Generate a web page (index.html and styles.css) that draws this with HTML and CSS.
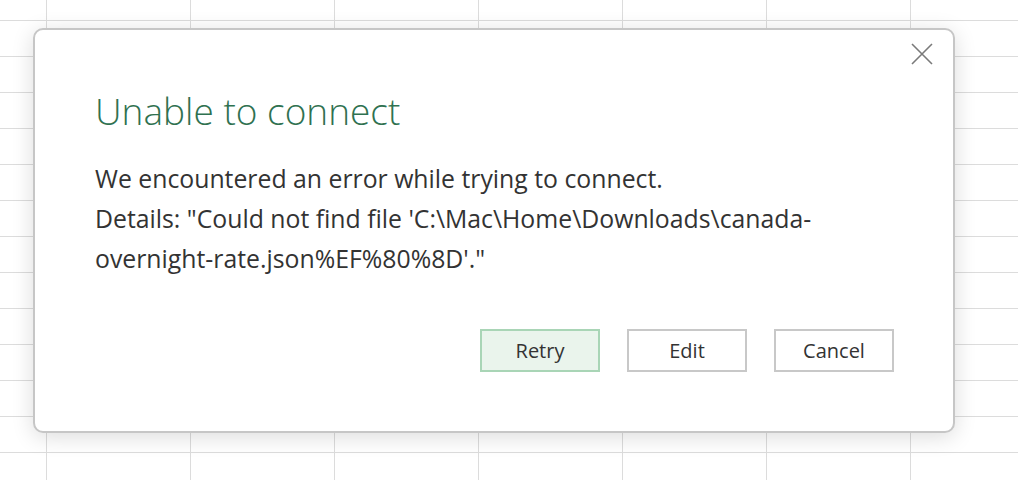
FILE: index.html
```html
<!DOCTYPE html>
<html lang="en">
<head>
    <meta charset="UTF-8">
    <meta name="viewport" content="width=device-width, initial-scale=1.0">
    <title>Unable to connect</title>
    <link rel="stylesheet" href="styles.css">
</head>
<body>
    <div class="sheet">
        <div class="dialog">
            <button class="close" type="button" aria-label="Close">
                <svg width="22" height="22" viewBox="0 0 22 22">
                    <path d="M1 1L21 21M21 1L1 21" stroke="#7a7a7a" stroke-width="1.6" fill="none"/>
                </svg>
            </button>
            <h1>Unable to connect</h1>
            <div class="message">
                <p>We encountered an error while trying to connect.</p>
                <p>Details: "Could not find file 'C:\Mac\Home\Downloads\canada-overnight-rate.json%EF%80%8D'."</p>
            </div>
            <div class="actions">
                <button type="button" class="btn primary">Retry</button>
                <button type="button" class="btn">Edit</button>
                <button type="button" class="btn">Cancel</button>
            </div>
        </div>
    </div>
</body>
</html>
```

FILE: styles.css
```css
html, body {
    margin: 0;
    padding: 0;
    height: 100%;
}
body {
    font-family: "Open Sans", "Noto Sans", sans-serif;
    background-color: #ffffff;
    background-image:
        linear-gradient(to right, #dcdcdc 1px, transparent 1px),
        linear-gradient(to bottom, #dcdcdc 1px, transparent 1px);
    background-size: 144px 36px;
    background-position: 46px 20px;
    overflow: hidden;
}
.sheet {
    padding: 28px 0 0 33px;
}
.dialog {
    position: relative;
    box-sizing: border-box;
    width: 922px;
    height: 405px;
    background: #ffffff;
    border: 2px solid #c6c6c6;
    border-radius: 10px;
    box-shadow: 0 4px 22px rgba(0, 0, 0, 0.14);
    padding: 56px 59px 0 60px;
    display: flex;
    flex-direction: column;
}
.close {
    position: absolute;
    top: 12px;
    right: 19px;
    width: 24px;
    height: 24px;
    padding: 0;
    border: none;
    background: none;
    display: flex;
    align-items: center;
    justify-content: center;
    cursor: pointer;
}
h1 {
    margin: 0;
    font-weight: 300;
    font-size: 37px;
    line-height: 50px;
    color: #2f7150;
}
.message {
    margin-top: 22px;
    color: #333333;
    font-size: 24.8px;
    line-height: 40px;
}
.message p {
    margin: 0;
}
.actions {
    margin-top: auto;
    margin-bottom: 59px;
    display: flex;
    justify-content: flex-end;
    gap: 27px;
}
.btn {
    box-sizing: border-box;
    width: 120px;
    height: 43px;
    border: 2px solid #c8c8c8;
    background: #ffffff;
    color: #333333;
    font-family: "Open Sans", "Noto Sans", sans-serif;
    font-size: 20px;
    cursor: pointer;
}
.btn.primary {
    background: #eaf4ec;
    border-color: #a9d5b6;
}
```
